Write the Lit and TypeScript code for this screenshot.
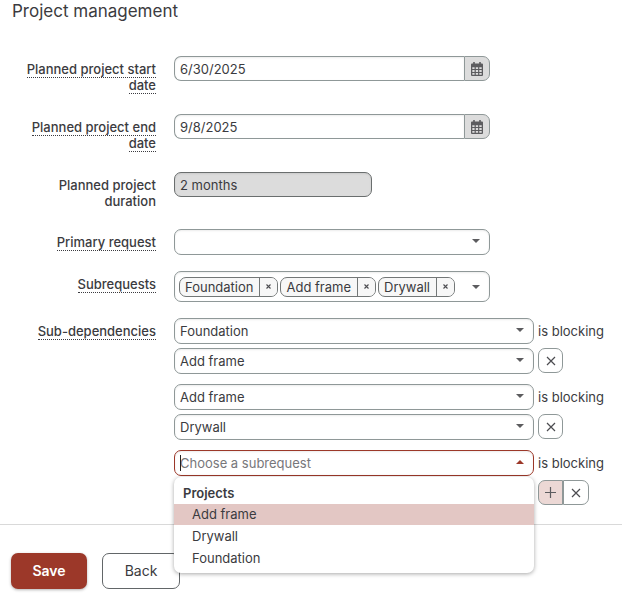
import { LitElement, html, css, svg } from "lit";
import { customElement, state } from "lit/decorators.js";

const CHOICES = ["Foundation", "Add frame", "Drywall"];

const shape = (name: string) => {
  switch (name) {
    case "calendar":
      return svg`<svg width="12" height="14" viewBox="0 0 12 14" aria-hidden="true">
        <path fill="#5c5c5f" fill-rule="evenodd" d="M2.2 0h1.6v1.6h4.4V0h1.6v1.6H11a1 1 0 0 1 1 1V13a1 1 0 0 1-1 1H1a1 1 0 0 1-1-1V2.600a1 1 0 0 1 1-1h1.200zM1.300 5.200v1.800h2.300V5.200zM4.800 5.200v1.800h2.300V5.200zM8.300 5.200v1.800h2.400V5.200zM1.300 8.100v1.800h2.300V8.100zM4.800 8.100v1.800h2.300V8.100zM8.300 8.100v1.800h2.400V8.100zM1.300 11v1.700h2.300V11zM4.800 11v1.700h2.300V11zM8.300 11v1.700h2.400V11z"/></svg>`;
    case "down":
      return svg`<svg width="8" height="4" viewBox="0 0 8 4" aria-hidden="true"><path fill="#5c5c5f" d="M0 0h8L4 4z"/></svg>`;
    case "up":
      return svg`<svg width="8" height="4" viewBox="0 0 8 4" aria-hidden="true"><path fill="#9c3829" d="M0 4h8L4 0z"/></svg>`;
    case "plus":
      return svg`<svg width="11" height="11" viewBox="0 0 11 11" aria-hidden="true"><path stroke="#5c5c5f" stroke-width="1.2" d="M5.5 0v11M0 5.5h11"/></svg>`;
    case "small-cross":
      return svg`<svg width="5" height="5" viewBox="0 0 5 5" aria-hidden="true"><path stroke="#4c4c50" stroke-width="1.1" d="M.5.5l4 4M4.5.5l-4 4"/></svg>`;
    default:
      return svg`<svg width="10" height="10" viewBox="0 0 10 10" aria-hidden="true"><path stroke="#4c4c50" stroke-width="1.2" d="M1 1l8 8M9 1l-8 8"/></svg>`;
  }
};

@customElement("app-root")
export class AppRoot extends LitElement {
  @state() private subrequests = ["Foundation", "Add frame", "Drywall"];
  @state() private active = "Add frame";

  static styles = css`
    :host {
      display: block;
      font-family: Inter, "Noto Sans", sans-serif;
      font-size: 13px;
      line-height: 16px;
      color: #3b3b40;
      background: #fff;
    }
    * { box-sizing: border-box; }
    button, input, select { font: inherit; color: inherit; margin: 0; }
    button { display: inline-flex; align-items: center; justify-content: center; padding: 0; cursor: pointer; background: #fff; }
    svg { display: block; }
    .title { margin: 0; padding: 0 12px; font-size: 17px; font-weight: 400; line-height: 22px; }
    .fields { display: grid; gap: 16px; padding: 34px 12px 18px; }
    .row { display: grid; grid-template-columns: 144px minmax(0, 1fr); column-gap: 18px; align-items: start; }
    .label { padding: 5px 0; text-align: right; font-weight: 500; }
    .label.single { padding-bottom: 0; }
    .label.plain { padding-bottom: 4px; }
    .help { border-bottom: 1px dotted #3b3b40; }
    .box {
      height: 26px;
      width: 100%;
      padding: 0 5px;
      border: 1px solid #8f9898;
      border-radius: 7px;
      background: #fff;
      box-shadow: inset 0 1px 2px rgba(0, 0, 0, 0.08);
      outline: 0;
    }
    .medium { max-width: 316px; width: 100%; }
    .date { display: flex; height: 25px; }
    .date .box { height: 25px; flex: 1; min-width: 0; border-radius: 7px 0 0 7px; border-right: 0; }
    .pick { width: 26px; border: 1px solid #8f9898; border-radius: 0 7px 7px 0; background: #dcdcdc; }
    .box.readonly { height: 25px; max-width: 198px; background: #dcdcdc; border-color: #6a6e6e; }
    .drop { position: relative; display: block; }
    .drop select { appearance: none; display: block; padding-right: 24px; }
    .drop .caret { position: absolute; right: 10px; top: 10px; pointer-events: none; }
    .tags { display: flex; align-items: center; height: 31px; padding: 0 9px 0 4px; gap: 2px; }
    .tag { display: flex; height: 20px; border: 1px solid #737777; border-radius: 7px; background: #f7f7f7; overflow: hidden; }
    .tag-text { padding: 0 6px 0 5px; line-height: 18px; }
    .tag-remove { width: 18px; border: 0; border-left: 1px solid #737777; background: #f7f7f7; }
    .toggle { margin-left: auto; border: 0; }
    .groups { display: grid; gap: 10px; }
    .pair { display: grid; grid-template-columns: minmax(0, 360px) 66px; column-gap: 4px; row-gap: 4px; }
    .blocking { line-height: 26px; white-space: nowrap; }
    .actions { display: flex; }
    .icon { width: 25px; height: 25px; border: 1px solid #8f9898; border-radius: 7px; }
    .icon.add { border-radius: 7px 0 0 7px; background: #ecd8d5; }
    .icon.last { width: 26px; border-radius: 0 7px 7px 0; }
    .box.open { display: block; border-color: #9c3829; padding-right: 24px; }
    .box.open::placeholder { color: #77777b; opacity: 1; }
    .cursor { position: absolute; left: 6px; top: 5px; width: 1px; height: 16px; background: #222; }
    .menu {
      position: absolute;
      z-index: 2;
      top: 100%;
      left: 0;
      right: 0;
      margin: 1px 0 0;
      padding: 6px 0 3px;
      background: #fff;
      border-radius: 7px;
      box-shadow: 0 1px 4px rgba(0, 0, 0, 0.35);
    }
    .menu-title { padding: 0 9px; line-height: 21px; font-weight: 600; }
    .option { margin-bottom: 1px; padding: 0 18px; line-height: 21px; }
    .option.active { background: #e3c7c4; }
    .footer { display: flex; gap: 15px; padding: 28px 11px 8px; border-top: 1px solid #d9d9d9; }
    .save, .back { height: 36px; border-radius: 7px; font-size: 14px; }
    .save { width: 76px; border: 0; background: #9c3829; color: #fff; font-weight: 600; box-shadow: 0 1px 3px rgba(0, 0, 0, 0.3); }
    .back { width: 78px; border: 1px solid #626668; }
  `;

  private select(id: string, value: string, label: string) {
    return html`<span class="drop">
      <select class="box" id=${id} aria-label=${label}>
        ${value ? "" : html`<option selected></option>`}
        ${CHOICES.map((c) => html`<option ?selected=${c === value}>${c}</option>`)}
      </select>
      <span class="caret">${shape("down")}</span>
    </span>`;
  }

  private date(id: string, text: string, value: string) {
    return html`<div class="row">
      <label class="label" for=${id}><span class="help">${text}</span></label>
      <div class="medium date">
        <input class="box" id=${id} .value=${value} />
        <button class="pick" aria-label="Pick a date">${shape("calendar")}</button>
      </div>
    </div>`;
  }

  private pair(n: number, first: string, second: string) {
    return html`<div class="pair">
      ${this.select(`blocker-${n}`, first, "Blocking subrequest")}
      <span class="blocking">is blocking</span>
      ${this.select(`blocked-${n}`, second, "Blocked subrequest")}
      <div class="actions"><button class="icon" aria-label="Remove">${shape("cross")}</button></div>
    </div>`;
  }

  private remove(name: string) {
    this.subrequests = this.subrequests.filter((s) => s !== name);
  }

  render() {
    return html`
      <h1 class="title">Project management</h1>
      <div class="fields">
        ${this.date("start", "Planned project start date", "6/30/2025")}
        ${this.date("end", "Planned project end date", "9/8/2025")}
        <div class="row">
          <label class="label plain" for="duration">Planned project duration</label>
          <input class="box readonly" id="duration" readonly .value=${"2 months"} />
        </div>
        <div class="row">
          <label class="label single" for="primary"><span class="help">Primary request</span></label>
          <div class="medium">${this.select("primary", "", "Primary request")}</div>
        </div>
        <div class="row">
          <span class="label single" id="subs"><span class="help">Subrequests</span></span>
          <div class="medium box tags" role="group" aria-labelledby="subs">
            ${this.subrequests.map(
              (s) => html`<span class="tag"><span class="tag-text">${s}</span><button class="tag-remove" aria-label="Remove ${s}" @click=${() => this.remove(s)}>${shape("small-cross")}</button></span>`
            )}
            <button class="toggle" aria-label="Show subrequests">${shape("down")}</button>
          </div>
        </div>
        <div class="row">
          <span class="label single" id="deps"><span class="help">Sub-dependencies</span></span>
          <div class="groups" role="group" aria-labelledby="deps">
            ${this.pair(1, "Foundation", "Add frame")}
            ${this.pair(2, "Add frame", "Drywall")}
            <div class="pair">
              <div class="drop">
                <input class="box open" role="combobox" aria-expanded="true" aria-controls="choices" aria-label="Blocking subrequest" placeholder="Choose a subrequest" />
                <span class="cursor"></span>
                <span class="caret">${shape("up")}</span>
                <div class="menu" id="choices" role="listbox" aria-label="Projects">
                  <div class="menu-title">Projects</div>
                  ${["Add frame", "Drywall", "Foundation"].map(
                    (o) => html`<div class="option ${o === this.active ? "active" : ""}" role="option" aria-selected=${o === this.active} @mouseenter=${() => (this.active = o)}>${o}</div>`
                  )}
                </div>
              </div>
              <span class="blocking">is blocking</span>
              ${this.select("blocked-3", "", "Blocked subrequest")}
              <div class="actions">
                <button class="icon add" aria-label="Add">${shape("plus")}</button>
                <button class="icon last" aria-label="Remove">${shape("cross")}</button>
              </div>
            </div>
          </div>
        </div>
      </div>
      <div class="footer">
        <button class="save">Save</button>
        <button class="back">Back</button>
      </div>
    `;
  }
}
